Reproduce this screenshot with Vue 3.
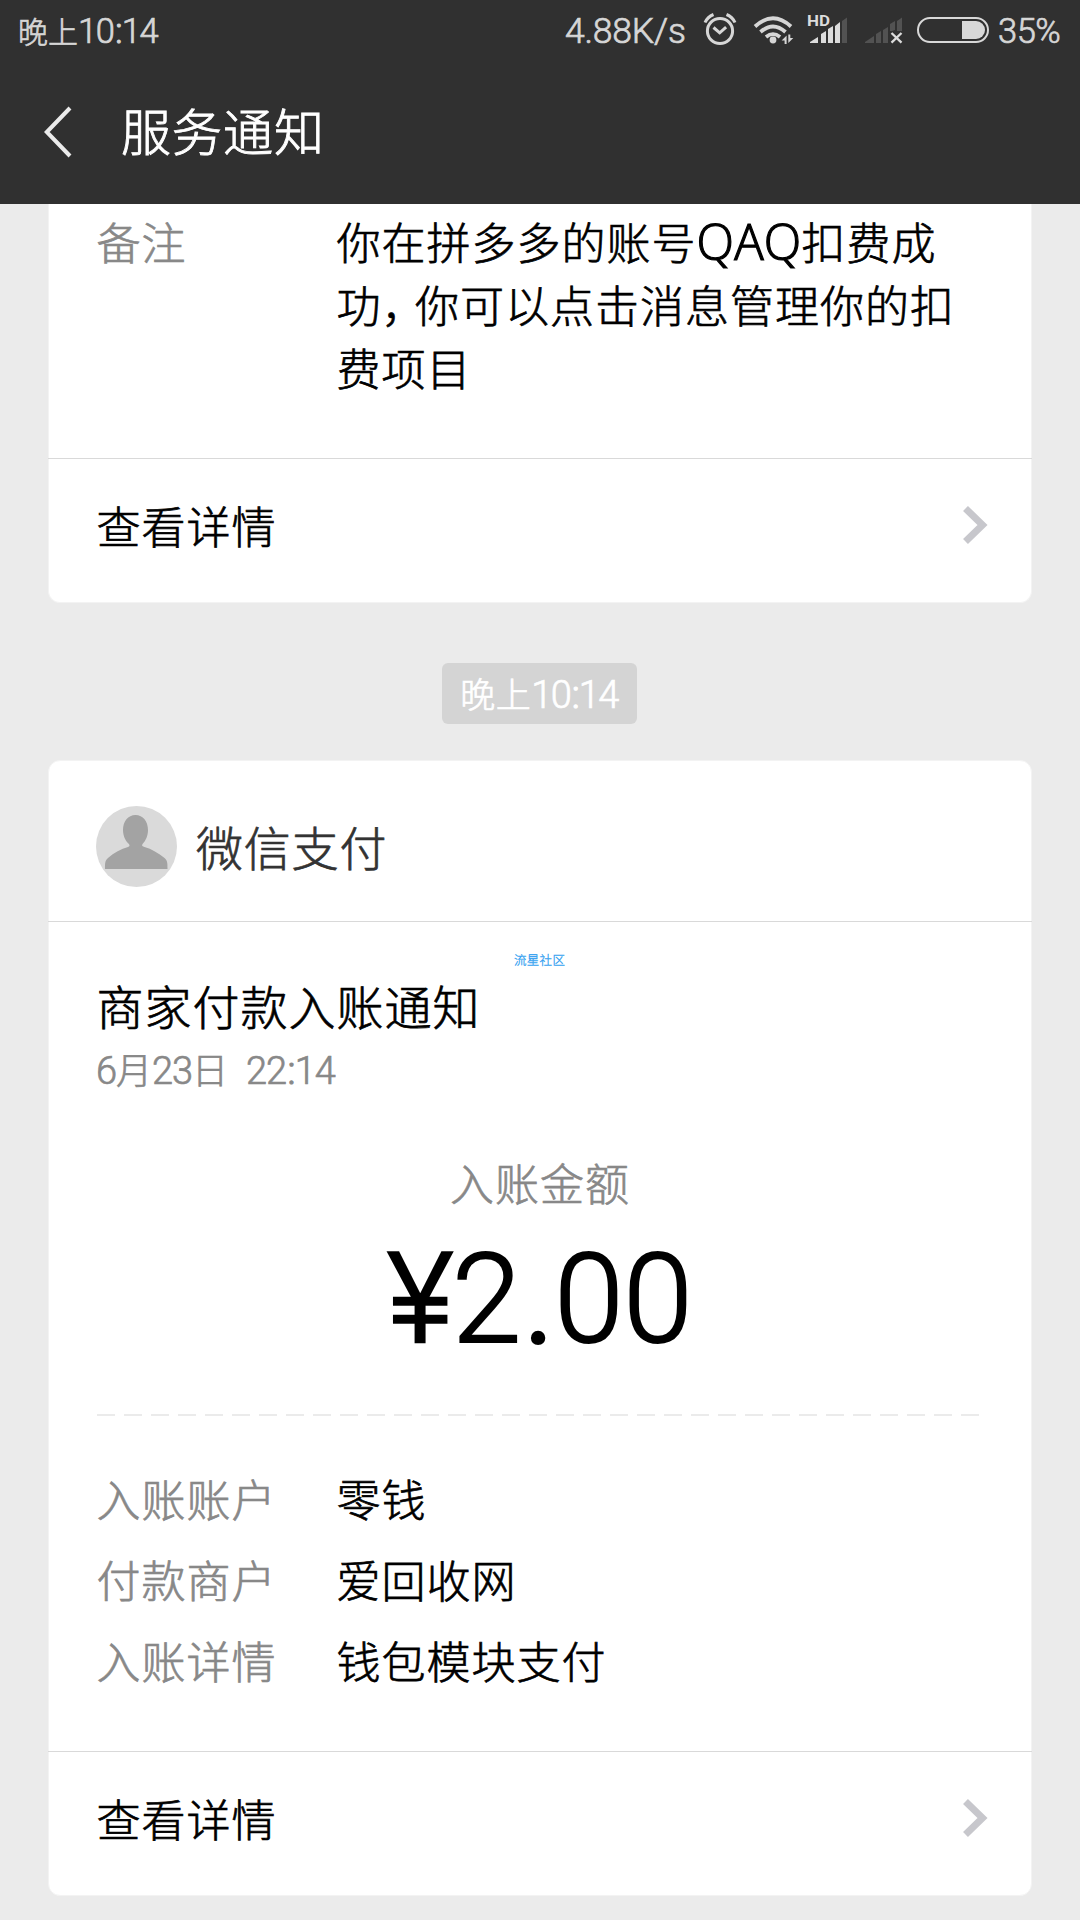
<script setup>
const remark = ['你在拼多多的账号', '扣费成']
const rows = [
  { label: '入账账户', value: '零钱' },
  { label: '付款商户', value: '爱回收网' },
  { label: '入账详情', value: '钱包模块支付' }
]
</script>

<template>
  <div class="screen">
    <header class="top">
      <div class="status">
        <div class="clock">晚上<span class="lat">10<span class="colon">:</span>14</span></div>
        <div class="speed">4.88K/s</div>
        <svg class="icons" width="296" height="60" viewBox="700 0 296 60">
          <g fill="none" stroke="#d6d6d6" stroke-width="3">
            <circle cx="720" cy="31" r="12.600" />
            <path d="M713.500 27.500l6.200 5.300 6.400-5.600" />
            <path d="M705 22.500q2.500-5.500 8.500-8M735 22.500q-2.500-5.500-8.500-8" />
          </g>
          <g fill="none" stroke="#d6d6d6" stroke-width="3.800">
            <path d="M755 26.500q18-16.500 36 0" />
            <path d="M760.500 32q12.500-11 25 0" />
            <path d="M766 37q7-5.800 14 0" />
          </g>
          <circle cx="773" cy="40" r="3.400" fill="#d6d6d6" />
          <path d="M786.600 34.500v9.500h-2v-3.500h-3l5-5zM788.300 44v-9.500h2v3.500h3l-5 5z" fill="#d6d6d6" />
          <text x="807" y="25.800" class="hd" textLength="23" lengthAdjust="spacingAndGlyphs">HD</text>
          <g fill="#dcdcdc">
            <path d="M810 43v-1l8-5v6z" />
            <path d="M821 43v-9l5-3v12z" />
            <path d="M828 43v-14l5-3v17z" />
            <path d="M835 43v-17l5-4v21z" />
          </g>
          <path d="M842 43v-22l5-3.500v25.500z" fill="#525252" />
          <g fill="#525252">
            <path d="M865 43v-1l9-6v7z" />
            <path d="M876 43v-9l5-3v12z" />
            <path d="M883 43v-13l5-3v16z" />
            <path d="M890 31v-7l5-3v9l-3 1z" />
            <path d="M897 31v-10l5-3.500v13.500z" />
          </g>
          <path d="M891.500 33l10 9.700M901.500 33l-10 9.700" stroke="#dcdcdc" stroke-width="2.300" />
          <rect x="918" y="18" width="70" height="24" rx="12" fill="none" stroke="#d8d8d8" stroke-width="2" />
          <path d="M962 21h14a9 9 0 0 1 0 18h-14z" fill="#d8d8d8" />
        </svg>
        <div class="pct">35%</div>
      </div>
      <div class="nav">
        <svg class="back" width="28" height="52" viewBox="0 0 28 52">
          <path d="M26 2L2.800 26 26 50" fill="none" stroke="#ebebeb" stroke-width="4" />
        </svg>
        <h1>服务通知</h1>
      </div>
    </header>

    <main>
      <section class="card first">
        <div class="row remark">
          <span class="label">备注</span>
          <p class="value">{{ remark[0] }}<span class="qaq">QAQ</span>{{ remark[1] }}<br />功<span class="comma">，</span>你可以点击消息管理你的扣<br />费项目</p>
        </div>
        <div class="foot">
          <span>查看详情</span>
          <svg width="26" height="40" viewBox="0 0 26 40"><path d="M2.500 3.500L19.500 20 2.500 36.500" fill="none" stroke="#c7c7cc" stroke-width="7" /></svg>
        </div>
      </section>

      <div class="pill">晚上<span class="lat">10<span class="colon">:</span>14</span></div>

      <section class="card second">
        <div class="sender">
          <svg width="81" height="81" viewBox="0 0 81 81">
            <circle cx="40.500" cy="40.500" r="40.500" fill="#dadada" />
            <path d="M39.500 9C32 9 27 15.500 27 24c0 6.500 3 11.500 6 14 1 2 .5 2.500-1 3-7 2-14 5.500-20 11-3 2.500-3 5-3 11h62.500c0-6 0-8.500-3-11-6-5-13-9-20-11-2-.6-3-1-2-3 3-3 5.500-8 5.500-14C52 15.500 47 9 39.500 9z" fill="#a3a3a3" />
          </svg>
          <span>微信支付</span>
        </div>
        <div class="body">
          <div class="watermark">流星社区</div>
          <h2>商家付款入账通知</h2>
          <div class="date"><span class="lat">6</span>月<span class="lat">23</span>日<span class="lat time">22<span class="colon">:</span>14</span></div>
          <div class="caption">入账金额</div>
          <div class="amount"><span class="yen">¥</span>2<span class="point">.</span>00</div>
          <div class="dash"></div>
          <div class="rows">
            <div v-for="r in rows" :key="r.label" class="row">
              <span class="label">{{ r.label }}</span>
              <span class="value">{{ r.value }}</span>
            </div>
          </div>
        </div>
        <div class="foot">
          <span>查看详情</span>
          <svg width="26" height="40" viewBox="0 0 26 40"><path d="M2.500 3.500L19.500 20 2.500 36.500" fill="none" stroke="#c7c7cc" stroke-width="7" /></svg>
        </div>
      </section>
    </main>
  </div>
</template>

<style>
body { margin: 0; background: #ebebeb; }
</style>

<style scoped>
.screen {
  width: 1080px;
  height: 1920px;
  overflow: hidden;
  background: #ebebeb;
  font-family: "Noto Sans CJK SC", sans-serif;
  font-weight: 300;
  color: #000;
  -webkit-text-stroke: 0.700px currentColor;
}
h1, h2, p { margin: 0; font-weight: inherit; }
svg { display: block; flex: none; }
.lat { font-family: Roboto, sans-serif; line-height: 0; }
.colon { margin: 0 0.500px 0 1.500px; -webkit-text-stroke-width: 1.200px; }
.top { height: 204px; background: #303030; }
.status {
  display: flex;
  height: 60px;
  color: #d6d6d6;
  line-height: 62px;
}
.clock { width: 547px; padding-left: 18px; font-size: 30px; letter-spacing: 0; line-height: 60px; white-space: nowrap; }
.clock .lat { font-size: 34.500px; letter-spacing: -1.300px; }
.speed { width: 135px; font-family: Roboto, sans-serif; font-size: 35.500px; letter-spacing: -0.200px; white-space: nowrap; }
.pct { margin-left: 2px; font-family: Roboto, sans-serif; font-size: 34.500px; letter-spacing: -0.500px; }
.hd { font: 700 15px Roboto, sans-serif; fill: #dcdcdc; -webkit-text-stroke: 0; }
.nav { display: flex; height: 144px; align-items: center; }
.back { margin-left: 44px; }
.nav h1 { margin-left: 49px; padding-bottom: 7px; font-size: 50px; letter-spacing: 1px; line-height: 60px; color: #fff; -webkit-text-stroke-width: 0.900px; }
main { display: flex; flex-direction: column; align-items: center; }
.card { box-sizing: border-box; width: 984px; border: 1px solid #f3f3f3; background: #fff; }
.first { height: 399px; border-top: 0; border-radius: 0 0 12px 12px; }
.second { height: 1136px; border-radius: 12px; }
.row { display: flex; height: 81px; padding-left: 47.500px; font-size: 44px; letter-spacing: 1px; line-height: 81px; }
.label { width: 240px; color: #888; }
.value { white-space: nowrap; }
.remark { height: 248px; padding-top: 6px; line-height: 63px; }
.qaq { font-family: "Open Sans", sans-serif; font-size: 49px; letter-spacing: 0.200px; line-height: 0; -webkit-text-stroke-width: 1.200px; }
.comma { letter-spacing: -10.500px; }
.foot {
  display: flex;
  height: 130px;
  margin: 0 -1px;
  padding: 0 43px 12px 48.500px;
  border-top: 1px solid #d9d9d9;
  align-items: center;
  justify-content: space-between;
  font-size: 44px;
  letter-spacing: 1px;
}
.foot { height: 131px; }
.pill {
  width: 195px;
  height: 61px;
  margin: 60px 2px 36px 0;
  border-radius: 6px;
  background: #d4d4d4;
  color: #fff;
  font-size: 35px;
  letter-spacing: 0.500px;
  line-height: 60px;
  text-align: center;
  white-space: nowrap;
}
.pill .lat { font-size: 38px; letter-spacing: -1.600px; }
.sender { display: flex; height: 115px; margin: 0 -1px; padding: 45px 0 0 48px; border-bottom: 1px solid #d9d9d9; font-size: 47px; letter-spacing: 0.800px; line-height: 80px; color: #333; }
.sender span { margin-left: 19px; }
.body { position: relative; height: 829px; }
.watermark { position: absolute; top: 28px; left: 465px; font-size: 12.500px; letter-spacing: 0.300px; line-height: 20px; color: #2f9ef0; -webkit-text-stroke-width: 0.300px; }
h2 { padding: 53px 0 0 47.500px; font-size: 47px; letter-spacing: 1px; line-height: 60px; }
.date { margin-top: 8px; padding-left: 47px; font-size: 36px; line-height: 50px; color: #888; white-space: nowrap; }
.date .lat { font-size: 38px; letter-spacing: -1.100px; }
.date .time { margin-left: 18px; }
.caption { margin-top: 59px; font-size: 44px; letter-spacing: 1px; line-height: 60px; text-align: center; color: #888; }
.amount { margin-top: 33px; font-family: Roboto, sans-serif; font-size: 125px; letter-spacing: -0.500px; line-height: 110px; text-align: center; -webkit-text-stroke-width: 2px; }
.yen { -webkit-text-stroke-width: 3.500px; }
.point { margin: 0 1px 0 3px; -webkit-text-stroke-width: 4px; }
.dash { width: 882px; height: 2px; margin: 59px 0 42px 48px; background: repeating-linear-gradient(90deg, #ebebeb 0 18px, transparent 18px 27px); }
</style>
